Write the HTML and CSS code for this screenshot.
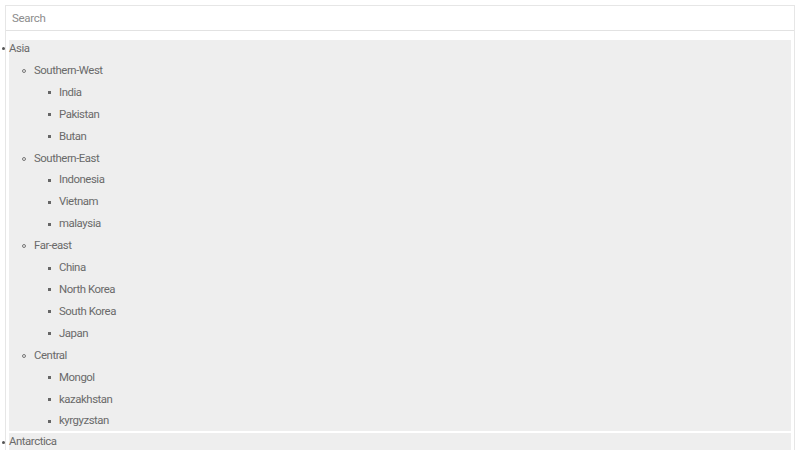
FILE: index.html
```html
<!DOCTYPE html>
<html>
<head>
<meta charset="utf-8">
<link rel="stylesheet" href="styles.css">
</head>
<body>
<div class="box">
  <input class="search" type="text" placeholder="Search">
  <ul class="tree">
    <li class="region">Asia
      <ul class="sub">
        <li>Southern-West
          <ul class="leaf">
            <li>India</li>
            <li>Pakistan</li>
            <li>Butan</li>
          </ul>
        </li>
        <li>Southern-East
          <ul class="leaf">
            <li>Indonesia</li>
            <li>Vietnam</li>
            <li>malaysia</li>
          </ul>
        </li>
        <li>Far-east
          <ul class="leaf">
            <li>China</li>
            <li>North Korea</li>
            <li>South Korea</li>
            <li>Japan</li>
          </ul>
        </li>
        <li>Central
          <ul class="leaf">
            <li>Mongol</li>
            <li>kazakhstan</li>
            <li>kyrgyzstan</li>
          </ul>
        </li>
      </ul>
    </li>
    <li class="region">Antarctica
      <ul class="sub">
        <li>East Antarctica</li>
      </ul>
    </li>
  </ul>
</div>
</body>
</html>
```
FILE: styles.css
```css
html, body {
  margin: 0;
  padding: 0;
  background: #fff;
}
body {
  font-family: Roboto, "Liberation Sans", sans-serif;
  font-size: 11.4px;
  letter-spacing: -0.45px;
  color: #6a6a6a;
  overflow: hidden;
}
.box {
  margin: 5px;
  border: 1px solid #e6e6e6;
  border-bottom: none;
  min-height: 460px;
}
.search {
  display: block;
  box-sizing: border-box;
  width: 100%;
  height: 25px;
  margin: 0;
  padding: 0 6px;
  border: none;
  border-bottom: 1px solid #e2e2e2;
  font-family: Roboto, "Liberation Sans", sans-serif;
  font-size: 11.5px;
  letter-spacing: -0.3px;
  color: #555;
  outline: none;
}
.search::placeholder {
  color: #8c8c8c;
}
.tree {
  list-style: none;
  margin: 9px 3px 0 3px;
  padding: 0;
}
.region {
  background: #eeeeee;
  line-height: 15.9px;
  padding-top: 1px;
  padding-bottom: 2px;
  margin-bottom: 2px;
}
.region::before {
  content: "";
  display: inline-block;
  width: 3px;
  height: 3px;
  border-radius: 50%;
  background: #555;
  margin-left: -7px;
  margin-right: 4px;
  vertical-align: middle;
}
.sub {
  list-style: none;
  margin: 0;
  padding-left: 25px;
}
.sub > li::before {
  content: "";
  display: inline-block;
  box-sizing: border-box;
  width: 4px;
  height: 4px;
  border: 1px solid #777;
  border-radius: 50%;
  margin-left: -12px;
  margin-right: 8px;
  vertical-align: middle;
}
.leaf {
  list-style: none;
  margin: 0;
  padding-left: 25px;
}
.leaf > li::before {
  content: "";
  display: inline-block;
  width: 3px;
  height: 3px;
  background: #666;
  margin-left: -11px;
  margin-right: 8px;
  vertical-align: middle;
}
.sub li {
  margin-top: 6px;
}
```
